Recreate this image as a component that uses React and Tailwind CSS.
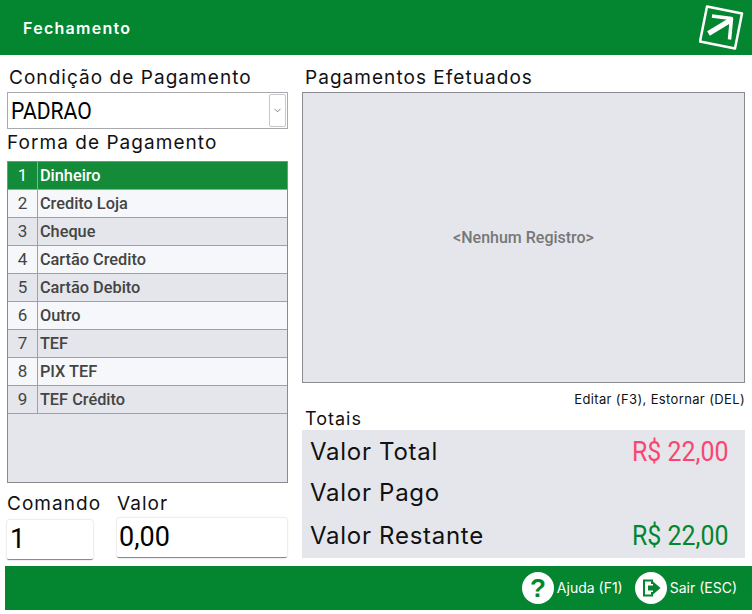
import React from "react";
import { ChevronDown } from "lucide-react";

const formas = ["Dinheiro", "Credito Loja", "Cheque", "Cartão Credito", "Cartão Debito", "Outro", "TEF", "PIX TEF", "TEF Crédito"];

const LABEL = "font-['Inter',sans-serif] text-[#111] tracking-[0.055em] whitespace-nowrap";
const ROBOTO = "font-['Roboto',sans-serif]";

const Logo = () => (
  <svg width="48" height="46" viewBox="0 0 48 46" fill="none" stroke="white" strokeLinejoin="round">
    <path d="M8 1.5 L43 8.5 L36 43.5 L1 36.5 Z" strokeWidth="2.5" />
    <path d="M13 11 L32.5 13.5 L30.5 34.5" strokeWidth="3.5" />
    <path d="M9.5 28.5 L31 15.5" strokeWidth="5" />
  </svg>
);

const HelpIcon = () => (
  <span className="flex h-8 w-8 items-center justify-center rounded-full bg-white">
    <span className="font-['Liberation_Sans',sans-serif] text-[26px] font-bold leading-none text-[#04852f]">?</span>
  </span>
);

const ExitIcon = () => (
  <span className="flex h-8 w-8 items-center justify-center rounded-full bg-white">
    <svg width="24" height="24" viewBox="0 0 24 24" fill="none">
      <path d="M13 8 V4.5 H5 V19.5 H13 V16" stroke="#04852f" strokeWidth="2" />
      <path d="M9 9.5 H14 V5.5 L21.5 12 L14 18.5 V14.5 H9 Z" fill="#04852f" />
    </svg>
  </span>
);

export default function App() {
  return (
    <div className="flex h-[614px] w-[752px] flex-col overflow-hidden bg-white">
      <header className="flex h-[55px] shrink-0 items-center justify-between bg-[#04852f] pl-[23px] pr-[5px]">
        <span className="pt-[1px] font-['Inter',sans-serif] text-[16px] font-semibold tracking-[0.08em] text-white">Fechamento</span>
        <Logo />
      </header>

      <div className="flex h-[503px] shrink-0 gap-[14px] pl-[7px] pr-[7px]">
        <div className="flex w-[281px] shrink-0 flex-col">
          <div className={`${LABEL} mt-[10px] h-[27px] shrink-0 pl-[2px] text-[19px] leading-[25px]`}>Condição de Pagamento</div>
          <div className="flex h-[37px] shrink-0 items-center justify-between border border-[#a9a9ae] pl-[3px] pr-[1px]">
            <span className={`${ROBOTO} origin-left scale-x-[0.88] text-[24px] text-black`}>PADRAO</span>
            <span className="flex h-[33px] w-[17px] items-center justify-center rounded-[2px] border border-[#c8c8cc]">
              <ChevronDown size={11} strokeWidth={1.5} className="text-[#555]" />
            </span>
          </div>
          <div className={`${LABEL} h-[32px] shrink-0 text-[19px] leading-[27px]`}>Forma de Pagamento</div>
          <div className="h-[322px] shrink-0 border border-[#8a8a90] bg-[#e5e6eb]">
            {formas.map((f, i) => (
              <div
                key={f}
                className={`flex h-[28px] items-center border-b border-[#a0a0a5] ${ROBOTO} text-[17px] font-medium ${
                  i === 0 ? "bg-[#148b38] text-white" : i % 2 === 1 ? "bg-[#f6f7fa] text-[#444]" : "bg-[#e5e6eb] text-[#444]"
                }`}
              >
                <span className="flex h-[27px] w-[30px] shrink-0 items-center justify-center border-r border-[#a0a0a5] font-normal">{i + 1}</span>
                <span className="origin-left scale-x-[0.96] whitespace-nowrap pl-[2px]">{f}</span>
              </div>
            ))}
          </div>
          <div className="mt-[9px] flex shrink-0 items-start gap-[24px]">
            <div className="w-[86px] shrink-0">
              <div className={`${LABEL} h-[28px] text-[19px] leading-[24px]`}>Comando</div>
              <div className={`flex h-[40px] items-center rounded-[2px] border-b border-[#8a8a90] pl-[3px] shadow-[0_0_2px_rgba(0,0,0,0.25)] ${ROBOTO} text-[27px] text-black`}>1</div>
            </div>
            <div className="w-[170px] shrink-0">
              <div className={`${LABEL} h-[26px] text-[19px] leading-[24px]`}>Valor</div>
              <div className={`flex h-[40px] items-center rounded-[2px] border-b border-[#8a8a90] pl-[2px] shadow-[0_0_2px_rgba(0,0,0,0.25)] ${ROBOTO} text-[27px] text-black`}>0,00</div>
            </div>
          </div>
        </div>

        <div className="flex min-w-0 flex-1 flex-col">
          <div className={`${LABEL} mt-[10px] h-[27px] shrink-0 pl-[3px] text-[19px] leading-[25px]`}>Pagamentos Efetuados</div>
          <div className={`flex h-[291px] shrink-0 items-center justify-center border border-[#8a8a90] bg-[#e5e6eb] pt-[1px] ${ROBOTO} text-[16px] font-medium text-[#777]`}>
            &lt;Nenhum Registro&gt;
          </div>
          <div className="mt-[7px] h-[19px] shrink-0 text-right font-['Inter',sans-serif] text-[13px] leading-[19px] tracking-[0.028em] text-[#111]">Editar (F3), Estornar (DEL)</div>
          <div className={`${LABEL} h-[21px] shrink-0 pl-[3px] text-[18px] leading-[20px]`}>Totais</div>
          <div className="flex h-[128px] shrink-0 flex-col bg-[#e5e6eb] pl-[8px] pr-[17px] pt-[2px]">
            {[
              ["Valor Total", "R$ 22,00", "text-[#fb4570]", "h-[40px]"],
              ["Valor Pago", "", "", "h-[42px]"],
              ["Valor Restante", "R$ 22,00", "text-[#04852f]", "h-[44px]"],
            ].map(([label, value, color, height]) => (
              <div key={label} className={`flex items-center justify-between ${height}`}>
                <span className="font-['Inter',sans-serif] text-[24px] tracking-[0.03em] text-[#111]">{label}</span>
                <span className={`${ROBOTO} origin-right scale-x-[0.89] text-[28px] ${color}`}>{value}</span>
              </div>
            ))}
          </div>
        </div>
      </div>

      <footer className="ml-[5px] mt-[8px] flex h-[44px] shrink-0 items-center justify-end gap-[12px] bg-[#04852f] pr-[15px]">
        <div className="flex items-center gap-[3px]">
          <HelpIcon />
          <span className="-mt-[2px] font-['Inter',sans-serif] text-[14px] text-white">Ajuda (F1)</span>
        </div>
        <div className="flex items-center gap-[3px]">
          <ExitIcon />
          <span className="-mt-[2px] font-['Inter',sans-serif] text-[14px] text-white">Sair (ESC)</span>
        </div>
      </footer>
    </div>
  );
}
